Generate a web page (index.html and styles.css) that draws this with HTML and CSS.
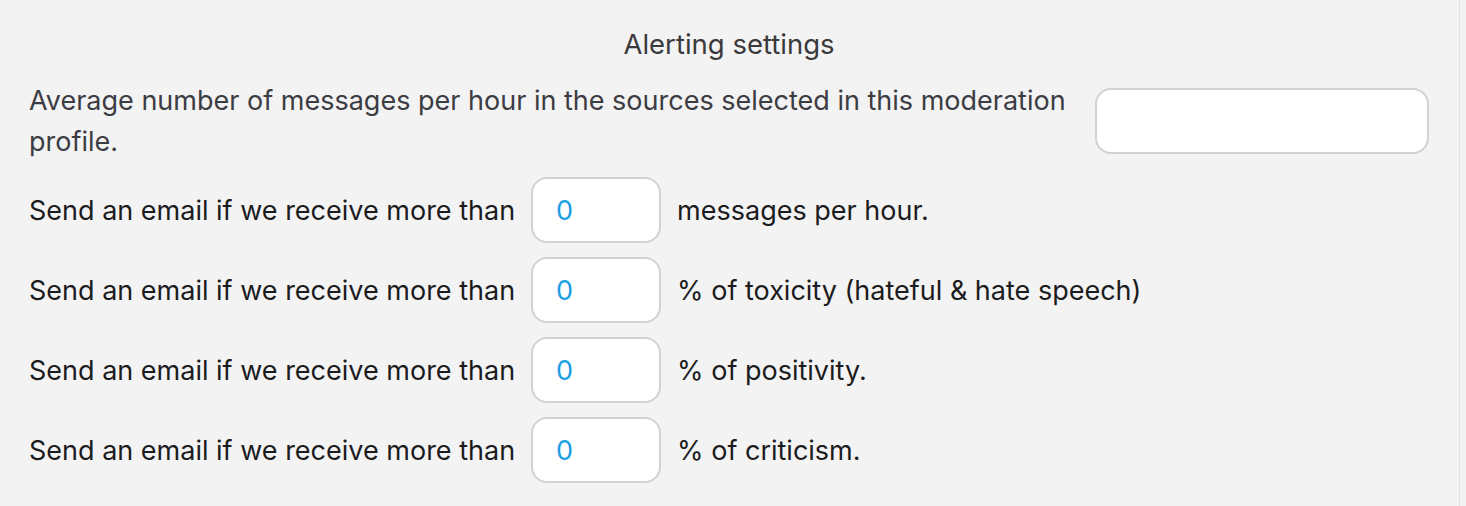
FILE: index.html
```html
<!DOCTYPE html>
<html lang="en">
<head>
    <meta charset="UTF-8">
    <meta name="viewport" content="width=device-width, initial-scale=1.0">
    <title>Alerting settings</title>
    <link rel="stylesheet" href="styles.css">
</head>
<body>
    <section class="panel">
        <h2 class="panel-title">Alerting settings</h2>
        <div class="row row-wide">
            <label class="row-label muted">Average number of messages per hour in the sources selected in this moderation profile.</label>
            <input class="field field-wide" type="text" value="">
        </div>
        <div class="row">
            <label class="row-label">Send an email if we receive more than</label>
            <input class="field" type="text" value="0">
            <span class="row-suffix">messages per hour.</span>
        </div>
        <div class="row">
            <label class="row-label">Send an email if we receive more than</label>
            <input class="field" type="text" value="0">
            <span class="row-suffix">% of toxicity (hateful &amp; hate speech)</span>
        </div>
        <div class="row">
            <label class="row-label">Send an email if we receive more than</label>
            <input class="field" type="text" value="0">
            <span class="row-suffix">% of positivity.</span>
        </div>
        <div class="row">
            <label class="row-label">Send an email if we receive more than</label>
            <input class="field" type="text" value="0">
            <span class="row-suffix">% of criticism.</span>
        </div>
    </section>
</body>
</html>
```
FILE: styles.css
```css
body {
    margin: 0;
    background: #f3f3f3;
    font-family: Inter, "Noto Sans", sans-serif;
    color: #1c1c1e;
}
.panel {
    width: 1460px;
    height: 506px;
    box-sizing: border-box;
    border-right: 1px solid #e2e2e4;
    padding: 24px 30px 0 29px;
}
.panel-title {
    margin: 0 0 16px;
    text-align: center;
    font-size: 27.5px;
    font-weight: 400;
    line-height: 40px;
    color: #3a3a3c;
}
.row {
    display: flex;
    align-items: center;
    gap: 16px;
    margin-bottom: 14px;
    font-size: 27px;
}
.row-wide {
    gap: 23px;
    margin-bottom: 15px;
}
.row-label {
    line-height: 41px;
}
.muted {
    color: #3c3c43;
    flex: 1;
}
.field {
    width: 130px;
    height: 66px;
    box-sizing: border-box;
    border: 2px solid #d1d1d6;
    border-radius: 16px;
    background: #fff;
    padding: 0 0 0 23px;
    font-family: inherit;
    font-size: 27px;
    color: #1a9fe3;
    outline: none;
}
.field-wide {
    width: 334px;
    flex: none;
}
```
